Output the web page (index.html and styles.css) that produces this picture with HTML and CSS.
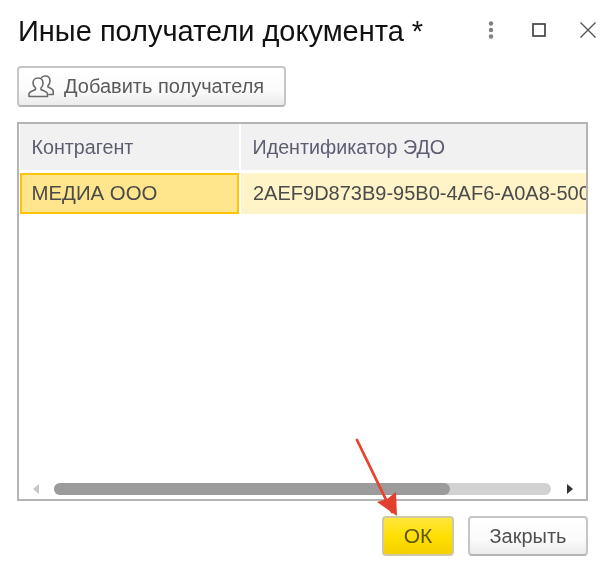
FILE: index.html
```html
<!DOCTYPE html>
<html lang="ru">
<head>
<meta charset="utf-8">
<title>Иные получатели документа</title>
<link rel="stylesheet" href="styles.css">
</head>
<body>
<div class="dialog">
  <header class="titlebar">
    <h1 class="title">Иные получатели документа *</h1>
    <div class="window-actions">
      <svg class="win-icon" width="16" height="20" viewBox="0 0 16 20"><g fill="#808080"><circle cx="8" cy="3.500" r="2.200"/><circle cx="8" cy="10" r="2.200"/><circle cx="8" cy="16.500" r="2.200"/></g></svg>
      <svg class="win-icon" width="16" height="16" viewBox="0 0 16 16"><rect x="2" y="2" width="12" height="12" fill="none" stroke="#444" stroke-width="1.700"/></svg>
      <svg class="win-icon" width="18" height="18" viewBox="0 0 18 18"><path d="M1.500 1.500 16.500 16.500M16.500 1.500 1.500 16.500" fill="none" stroke="#555" stroke-width="1.400"/></svg>
    </div>
  </header>
  <div class="toolbar">
    <button class="btn btn-add" type="button">
      <svg width="26" height="23" viewBox="0 0 26 23"><g fill="none" stroke="#6a6a6a" stroke-width="1.600" stroke-linejoin="round" stroke-linecap="round"><path d="M10 3c3.200 0 5 2.300 5 5.200 0 2.300-1 3.800-2 4.800v1.500c2 1.200 6.500 1.700 6.500 4.500V21.500H1V19c0-2.800 4.500-3.300 6.500-4.500V13c-1-1-2.500-2.500-2.500-4.800C5 5.300 6.800 3 10 3z"/><path d="M13.500 2.500C14.500 1.500 16 1 17.200 1c3.200 0 4.800 2.300 4.800 5 0 2.200-1 3.600-2 4.700v1.300c2 1.100 5.200 1.700 5.200 4.200V19.500H21"/></g></svg>
      <span>Добавить получателя</span>
    </button>
  </div>
  <section class="grid">
    <div class="grid-body">
      <div class="grid-row head-row">
        <div class="cell col-a">Контрагент</div>
        <div class="cell col-b">Идентификатор ЭДО</div>
      </div>
      <div class="grid-row data-row">
        <div class="cell col-a current">МЕДИА ООО</div>
        <div class="cell col-b selected">2AEF9D873B9-95B0-4AF6-A0A8-500C</div>
      </div>
    </div>
    <div class="scrollbar">
      <span class="arrow arrow-left"></span>
      <div class="track"><div class="thumb"></div></div>
      <span class="arrow arrow-right"></span>
    </div>
  </section>
  <footer class="actions">
    <button class="btn btn-ok" type="button">ОК</button>
    <button class="btn btn-close" type="button">Закрыть</button>
  </footer>
  <svg class="pointer" width="60" height="90" viewBox="0 0 60 90"><path d="M2 4 37 76" stroke="#e8432f" stroke-width="2.800" fill="none" stroke-linecap="round"/><path d="M42 80 22 66 32 63 41 56z" fill="#e23f2d"/></svg>
</div>
</body>
</html>
```
FILE: styles.css
```css
* { box-sizing: border-box; }
html, body { margin: 0; height: 100%; background: #fff; }
body { font-family: "Liberation Sans", Arial, sans-serif; color: #4a4a4a; }
.dialog {
  position: relative;
  width: 614px;
  height: 577px;
  padding: 0 26px 21px 17px;
  display: flex;
  flex-direction: column;
  filter: blur(0.45px);
  overflow: hidden;
}
.titlebar {
  height: 66px;
  display: flex;
  align-items: flex-start;
  justify-content: space-between;
  flex: none;
  margin-right: -22px;
}
.title {
  margin: 14px 0 0 1px;
  font-size: 29px;
  line-height: 34px;
  font-weight: 400;
  color: #111;
  white-space: nowrap;
}
.window-actions {
  display: flex;
  align-items: center;
  gap: 32px;
  margin: 20px 13px 0 0;
}
.win-icon { display: block; }
.toolbar { flex: none; height: 56px; }
.btn {
  font: inherit;
  color: #505050;
  border: 2px solid #c6c6c6;
  border-bottom-color: #b4b4b4;
  border-radius: 4px;
  background: linear-gradient(#fff 0%, #fbfbfb 60%, #ebebeb 100%);
  display: flex;
  align-items: center;
  justify-content: center;
  padding: 0;
}
.btn-add {
  width: 269px;
  height: 41px;
  font-size: 20px;
  gap: 10px;
  padding-left: 9px;
  justify-content: flex-start;
}
.btn-add span { color: #5a5a5a; }
.grid {
  flex: 1;
  min-height: 0;
  border: 2px solid #b4b4b4;
  display: flex;
  flex-direction: column;
  overflow: hidden;
}
.grid-body { flex: 1; min-height: 0; overflow: hidden; }
.grid-row { display: flex; gap: 2px; padding: 0 0 0 1px; }
.head-row { height: 46px; margin-bottom: 3px; }
.data-row { height: 41px; }
.cell {
  display: flex;
  align-items: center;
  font-size: 20px;
  padding-left: 12px;
  white-space: nowrap;
  overflow: hidden;
}
.col-a { width: 219px; flex: none; }
.col-b { flex: 1; min-width: 0; }
.head-row .cell { background: #f1f1f1; color: #5d5d72; font-size: 19.700px; padding-left: 11.500px; }
.current { background: #ffe58c; border: 2px solid #fcc30d; padding-left: 9.500px; color: #4b4b4b; font-size: 20.400px; }
.selected { background: #fff3c8; color: #4b4b4b; }
.scrollbar {
  flex: none;
  height: 26px;
  display: flex;
  align-items: flex-start;
  position: relative;
}
.track {
  position: absolute;
  left: 35px;
  top: 10px;
  width: 497px;
  height: 12px;
  border-radius: 6px;
  background: #d2d2d2;
}
.thumb { width: 396px; height: 100%; border-radius: 6px; background: #9b9b9b; }
.arrow { position: absolute; top: 11px; width: 0; height: 0; border-style: solid; border-color: transparent; border-width: 5px 0; }
.arrow-left { left: 14px; border-right: 6px solid #c6c6c6; }
.arrow-right { left: 548px; border-left: 6px solid #333; }
.actions {
  flex: none;
  display: flex;
  justify-content: flex-end;
  gap: 14px;
  margin-top: 15px;
  height: 40px;
}
.btn-ok {
  width: 72px;
  font-size: 21px;
  background: linear-gradient(#ffe63a 0%, #ffdf00 55%, #f4cf00 100%);
  border-color: #cfc9a6;
  color: #5e5716;
}
.btn-close { width: 120px; font-size: 20px; }
.pointer { position: absolute; left: 355px; top: 436px; }
```
